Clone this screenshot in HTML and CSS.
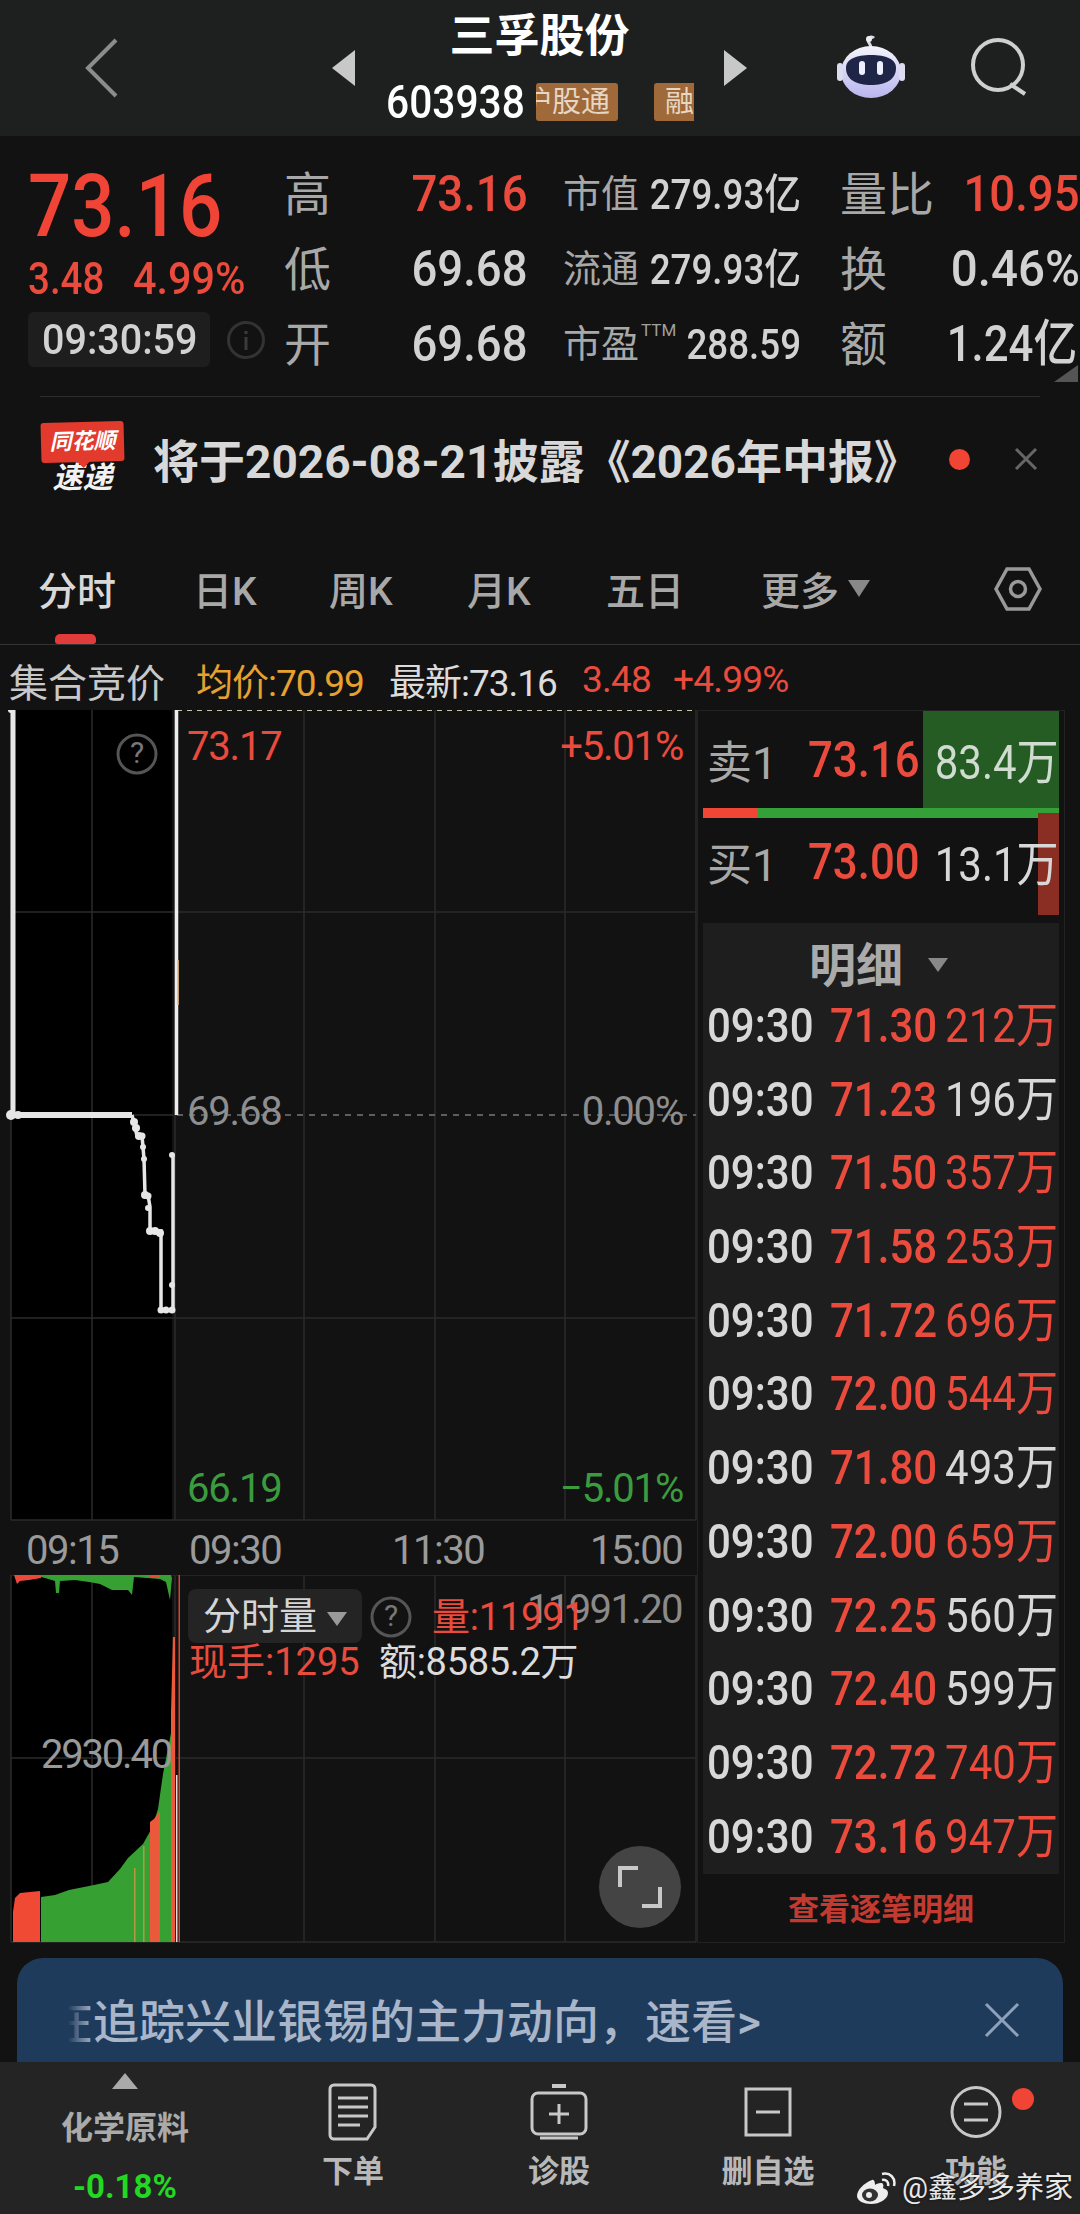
FILE: index.html
```html
<!DOCTYPE html>
<html lang="zh">
<head>
<meta charset="utf-8">
<title>三孚股份</title>
<link rel="stylesheet" href="styles.css">
</head>
<body>
<div class="page">
  <header class="header">
    <div class="back"><svg width="34" height="60" viewBox="0 0 34 60"><path d="M31 2 3 30l28 28" fill="none" stroke="#8c8c8c" stroke-width="4"/></svg></div>
    <div class="arrow-cell"><svg width="23" height="36" viewBox="0 0 23 36"><path d="M23 0v36L0 18z" fill="#c8c8c8"/></svg></div>
    <div class="title-cell">
      <div class="title">三孚股份</div>
      <div class="code-row">
        <span class="code">603938</span>
        <span class="tag tag-hk">沪股通</span>
        <span class="tag tag-rong">融</span>
      </div>
    </div>
    <div class="arrow-cell"><svg width="23" height="36" viewBox="0 0 23 36"><path d="M0 0v36l23-18z" fill="#c8c8c8"/></svg></div>
    <div class="robot">
      <svg width="68" height="64" viewBox="0 0 68 64">
        <defs><linearGradient id="rb" x1="0" y1="0" x2="0" y2="1"><stop offset="0" stop-color="#f4f4fb"/><stop offset="1" stop-color="#b9b4ee"/></linearGradient></defs>
        <path d="M34 13c0-4-3-5-3-8 0-3 4-4 6-2" fill="none" stroke="#d8d8e8" stroke-width="3"/>
        <circle cx="32" cy="4" r="3" fill="#eee"/>
        <ellipse cx="34" cy="37" rx="30" ry="26" fill="url(#rb)"/>
        <rect x="0" y="28" width="6" height="18" rx="3" fill="#dcdcf0"/>
        <rect x="62" y="28" width="6" height="18" rx="3" fill="#dcdcf0"/>
        <path d="M9 33c0-9 10-13 25-13s25 4 25 13c0 12-11 17-25 17S9 45 9 33z" fill="#1f2547"/>
        <rect x="22" y="26" width="6" height="14" rx="3" fill="#eef0ff"/>
        <rect x="40" y="26" width="6" height="14" rx="3" fill="#eef0ff"/>
      </svg>
    </div>
    <div class="search">
      <svg width="58" height="58" viewBox="0 0 58 58"><circle cx="27" cy="27" r="25" fill="none" stroke="#cfcfcf" stroke-width="4"/><path d="M39 46l15 10" stroke="#cfcfcf" stroke-width="4" fill="none"/></svg>
    </div>
  </header>

  <section class="stats">
    <div class="quote">
      <div class="price"><span class="sq">73.16</span></div>
      <div class="change"><span class="chg-a"><span class="sq">3.48</span></span><span class="sq sq-w">4.99%</span></div>
      <div class="time-row">
        <div class="time"><span class="sq sq-w">09:30:59</span></div>
        <svg class="info" width="38" height="40" viewBox="0 0 38 40"><circle cx="19" cy="20" r="17.5" fill="none" stroke="#333" stroke-width="3"/><path d="M19 11v3M19 17v13" stroke="#3b3b3b" stroke-width="3"/></svg>
      </div>
    </div>
    <div class="grid">
      <div class="lab">高</div><div class="val red"><span class="sqr sqr-n">73.16</span></div>
      <div class="mid"><span class="mid-lab">市值</span><span class="mid-val"><span class="sqr">279.93亿</span></span></div>
      <div class="right"><span class="lab">量比</span><span class="val red"><span class="sqr sqr-n">10.95</span></span></div>

      <div class="lab">低</div><div class="val"><span class="sqr sqr-n">69.68</span></div>
      <div class="mid"><span class="mid-lab">流通</span><span class="mid-val"><span class="sqr">279.93亿</span></span></div>
      <div class="right"><span class="lab">换</span><span class="val"><span class="sqr sqr-w">0.46%</span></span></div>

      <div class="lab">开</div><div class="val"><span class="sqr sqr-n">69.68</span></div>
      <div class="mid"><span class="mid-lab">市盈<sup class="ttm">TTM</sup></span><span class="mid-val"><span class="sqr">288.59</span></span></div>
      <div class="right right-last"><span class="lab">额</span><span class="val"><span class="sqr">1.24亿</span></span></div>
    </div>
    <i class="corner"></i>
  </section>

  <section class="news">
    <div class="logo">
      <div class="logo-top">同花顺</div>
      <div class="logo-bottom">速递</div>
    </div>
    <div class="news-text">将于2026-08-21披露《2026年中报》</div>
    <i class="news-dot"></i>
    <svg class="news-close" width="24" height="22" viewBox="0 0 24 22"><path d="M2 1l20 20M22 1 2 21" stroke="#666" stroke-width="3"/></svg>
  </section>

  <nav class="tabs">
    <span class="tab tab-on">分时</span>
    <span class="tab">日K</span>
    <span class="tab">周K</span>
    <span class="tab">月K</span>
    <span class="tab">五日</span>
    <span class="tab tab-more">更多<i class="tri tri-more"></i></span>
    <svg class="hex" width="48" height="44" viewBox="0 0 48 44"><path d="M13 2h22l11 20-11 20H13L2 22z" fill="none" stroke="#999" stroke-width="3.5"/><circle cx="24" cy="22" r="7.5" fill="none" stroke="#999" stroke-width="3.5"/></svg>
  </nav>

  <div class="infobar">
    <span class="auction">集合竞价</span>
    <span class="avg">均价:70.99</span>
    <span class="latest">最新:73.16</span>
    <span class="up">3.48</span>
    <span class="up up-pct">+4.99%</span>
  </div>

  <main class="market">
    <div class="charts">
      <div class="chart chart-price">
        <svg class="chart-svg" width="697" height="811" viewBox="0 710 697 811">
          <rect x="11" y="710" width="161" height="810" fill="#000"/>
          <g stroke="#2b2b2b" stroke-width="1.5">
            <path d="M92 710v810M175 710v810M304 710v810M435 710v810M565 710v810M696 710v810M11 710v810"/>
            <path d="M11 912h685M11 1318h685M11 1520h685M11 1115h166"/>
          </g>
          <path d="M177 710h519" stroke="#c9c4a8" stroke-width="2" stroke-dasharray="5 5"/>
          <path d="M177 1115h519" stroke="#777" stroke-width="1.5" stroke-dasharray="6 6"/>
          <path d="M13 710v405" stroke="#e6e6e6" stroke-width="5" fill="none"/>
          <path d="M176.500 710v405" stroke="#eee" stroke-width="3.500" fill="none"/>
          <path d="M178 960v45" stroke="#e8b878" stroke-width="1.500" fill="none"/>
          <path d="M9 1115h123" stroke="#e6e6e6" stroke-width="6" fill="none"/>
          <path d="M132 1115l3 12 2 9h5l1 11 1 12 1 36h3l2 12v24h11v79h12v-155" stroke="#e6e6e6" stroke-width="3.500" fill="none"/>
          <g fill="#e6e6e6">
            <circle cx="11" cy="710" r="3"/><circle cx="11" cy="1115" r="5"/><circle cx="18" cy="1115" r="4"/>
            <circle cx="134" cy="1122" r="4"/><circle cx="136" cy="1128" r="4"/><circle cx="139" cy="1136" r="4"/><circle cx="142" cy="1136" r="3.500"/>
            <circle cx="143" cy="1147" r="3"/><circle cx="144" cy="1159" r="3"/><circle cx="145" cy="1195" r="4"/><circle cx="148" cy="1196" r="3.500"/><circle cx="148" cy="1208" r="3"/>
            <circle cx="150" cy="1231" r="4"/><circle cx="155" cy="1231" r="4"/><circle cx="160" cy="1233" r="4"/>
            <circle cx="161" cy="1310" r="3.500"/><circle cx="166" cy="1310" r="3.500"/><circle cx="172" cy="1310" r="3.500"/>
            <circle cx="172" cy="1285" r="3"/><circle cx="172" cy="1155" r="3"/>
          </g>
        </svg>
        <svg class="help help-price" width="42" height="42" viewBox="0 0 42 42"><circle cx="21" cy="21" r="19" fill="none" stroke="#555" stroke-width="3"/><text x="21" y="30" text-anchor="middle" class="help-q">?</text></svg>
        <span class="lbl lbl-tl red">73.17</span>
        <span class="lbl lbl-tr red">+5.01%</span>
        <span class="lbl lbl-ml gray">69.68</span>
        <span class="lbl lbl-mr gray">0.00%</span>
        <span class="lbl lbl-bl green">66.19</span>
        <span class="lbl lbl-br green">−5.01%</span>
      </div>
      <div class="axis">
        <span class="ax ax-a">09:15</span>
        <span class="ax ax-b">09:30</span>
        <span class="ax ax-c">11:30</span>
        <span class="ax ax-d">15:00</span>
      </div>
      <div class="chart chart-vol">
        <svg class="chart-svg" width="697" height="368" viewBox="0 1575 697 368">
          <rect x="11" y="1575" width="161" height="367" fill="#000"/>
          <g stroke="#2b2b2b" stroke-width="1.5">
            <path d="M92 1575v367M175 1575v367M304 1575v367M435 1575v367M565 1575v367M696 1575v367M11 1575v367"/>
            <path d="M11 1575h685M11 1758h685M11 1942h685"/>
          </g>
          <path d="M14 1575h27v3l-12 2-9 1-3 3z" fill="#ea4b38"/>
          <path d="M41 1575H171l1 3-2 22-4-18-6-3-26-2-2 18-4-5-16 0-12-6-11-2-14-2-15 1-1 12h-3l-1-12-10-3-4-1z" fill="#36a033"/>
          <path d="M150 1575h10v2h-10z" fill="#ea4b38"/>
          <path d="M13 1942v-30l2-14 5-5 20-2v51z" fill="#f04a34"/>
          <path d="M41 1942v-45l14-2 14-5 25-5 14-3 12-13 8-11 15-14 9-16 6-19 5-35 9-46v214z" fill="#36a033"/>
          <path d="M150 1942v-120l4-3 6-8v131z" fill="#ea5a3a"/>
          <rect x="134" y="1868" width="1.500" height="74" fill="#b39a42"/>
          <rect x="143" y="1846" width="1.500" height="96" fill="#b39a42"/>
          <path d="M171 1942v-230l2-75 2 0v305z" fill="#ea5a3a"/>
          <rect x="178.500" y="1575" width="1.500" height="367" fill="#d44535"/>
          <rect x="176" y="1775" width="1.500" height="167" fill="#ddd"/>
        </svg>
        <div class="vol-chip">
          <span>分时量</span><i class="tri tri-chip"></i>
        </div>
        <svg class="help help-vol" width="42" height="42" viewBox="0 0 42 42"><circle cx="21" cy="21" r="19" fill="none" stroke="#555" stroke-width="3"/><text x="21" y="30" text-anchor="middle" class="help-q">?</text></svg>
        <span class="vol-max">11991.20</span>
        <span class="vol-amt red">量:11991</span>
        <span class="vol-hand red">现手:1295</span>
        <span class="vol-sum">额:8585.2万</span>
        <span class="vol-mid">2930.40</span>
        <div class="expand"><svg width="44" height="44" viewBox="0 0 44 44"><path d="M2 22V3h18M42 22v19H24" fill="none" stroke="#c8c8c8" stroke-width="4"/></svg></div>
      </div>
    </div>

    <aside class="panel">
      <div class="book book-sell">
        <i class="depth depth-sell"></i>
        <span class="book-lab">卖1</span>
        <span class="book-price"><span class="sq">73.16</span></span>
        <span class="book-vol book-vol-sell"><span class="sqr">83.4万</span></span>
      </div>
      <div class="ratio"><i class="ratio-up"></i><i class="ratio-down"></i></div>
      <div class="book book-buy">
        <i class="depth depth-buy"></i>
        <span class="book-lab">买1</span>
        <span class="book-price"><span class="sq">73.00</span></span>
        <span class="book-vol"><span class="sqr">13.1万</span></span>
      </div>
      <div class="detail">
        <div class="detail-title"><span>明细</span><i class="tri tri-detail"></i></div>
        <div class="tick"><span class="t"><span class="sq">09:30</span></span><span class="p"><span class="sq">71.30</span></span><span class="v red"><span class="sqr">212万</span></span></div>
        <div class="tick"><span class="t"><span class="sq">09:30</span></span><span class="p"><span class="sq">71.23</span></span><span class="v"><span class="sqr">196万</span></span></div>
        <div class="tick"><span class="t"><span class="sq">09:30</span></span><span class="p"><span class="sq">71.50</span></span><span class="v red"><span class="sqr">357万</span></span></div>
        <div class="tick"><span class="t"><span class="sq">09:30</span></span><span class="p"><span class="sq">71.58</span></span><span class="v red"><span class="sqr">253万</span></span></div>
        <div class="tick"><span class="t"><span class="sq">09:30</span></span><span class="p"><span class="sq">71.72</span></span><span class="v red"><span class="sqr">696万</span></span></div>
        <div class="tick"><span class="t"><span class="sq">09:30</span></span><span class="p"><span class="sq">72.00</span></span><span class="v red"><span class="sqr">544万</span></span></div>
        <div class="tick"><span class="t"><span class="sq">09:30</span></span><span class="p"><span class="sq">71.80</span></span><span class="v"><span class="sqr">493万</span></span></div>
        <div class="tick"><span class="t"><span class="sq">09:30</span></span><span class="p"><span class="sq">72.00</span></span><span class="v red"><span class="sqr">659万</span></span></div>
        <div class="tick"><span class="t"><span class="sq">09:30</span></span><span class="p"><span class="sq">72.25</span></span><span class="v"><span class="sqr">560万</span></span></div>
        <div class="tick"><span class="t"><span class="sq">09:30</span></span><span class="p"><span class="sq">72.40</span></span><span class="v"><span class="sqr">599万</span></span></div>
        <div class="tick"><span class="t"><span class="sq">09:30</span></span><span class="p"><span class="sq">72.72</span></span><span class="v red"><span class="sqr">740万</span></span></div>
        <div class="tick"><span class="t"><span class="sq">09:30</span></span><span class="p"><span class="sq">73.16</span></span><span class="v red"><span class="sqr">947万</span></span></div>
      </div>
      <div class="detail-link">查看逐笔明细</div>
    </aside>
  </main>

  <section class="banner">
    <span class="banner-fade">在</span>
    <span class="banner-text">追踪兴业银锡的主力动向，速看&gt;</span>
    <svg class="banner-close" width="36" height="36" viewBox="0 0 36 36"><path d="M2 2l32 32M34 2 2 34" stroke="#8ea1bb" stroke-width="3"/></svg>
  </section>

  <footer class="nav">
    <div class="nav-sector">
      <i class="nav-up"></i>
      <span class="sector-name">化学原料</span>
      <span class="sector-pct">-0.18%</span>
    </div>
    <div class="nav-item">
      <svg width="50" height="58" viewBox="0 0 50 58"><path d="M6 2h37a4 4 0 0 1 4 4v38l-8 12H6a4 4 0 0 1-4-4V6a4 4 0 0 1 4-4z" fill="none" stroke="#c8c8c8" stroke-width="3"/><path d="M10 15h30M10 24h30M10 33h30M10 42h22" stroke="#c8c8c8" stroke-width="3"/></svg>
      <span>下单</span>
    </div>
    <div class="nav-item">
      <svg width="58" height="58" viewBox="0 0 58 58"><path d="M22 3h14" stroke="#c8c8c8" stroke-width="4"/><rect x="2" y="10" width="54" height="41" rx="6" fill="none" stroke="#c8c8c8" stroke-width="3"/><path d="M29 21v20M19 31h20M10 55h38" stroke="#c8c8c8" stroke-width="3"/></svg>
      <span>诊股</span>
    </div>
    <div class="nav-item">
      <svg width="48" height="58" viewBox="0 0 48 58"><rect x="2" y="6" width="44" height="46" fill="none" stroke="#c8c8c8" stroke-width="3"/><path d="M12 29h24" stroke="#c8c8c8" stroke-width="3"/></svg>
      <span>删自选</span>
    </div>
    <div class="nav-item">
      <svg width="52" height="58" viewBox="0 0 52 58"><ellipse cx="26" cy="29" rx="24" ry="24.500" fill="none" stroke="#c8c8c8" stroke-width="3"/><path d="M14 21h24M14 37h24" stroke="#c8c8c8" stroke-width="3"/></svg>
      <span>功能</span>
      <i class="nav-dot"></i>
    </div>
  </footer>

  <div class="watermark">
    <svg width="40" height="34" viewBox="0 0 40 34"><path d="M16 9C8 12 1 19 1 25c0 5 7 8 14 8 9 0 17-5 17-11 0-3-3-4-5-5 1-3 0-5-2-5-3 0-5 1-6 2 0-3-1-6-3-5z" fill="#eee"/><ellipse cx="14" cy="24" rx="8" ry="6.500" fill="#333"/><circle cx="13" cy="24" r="3" fill="#eee"/><path d="M26 9c4-1 7 2 6 6M26 3c8-2 14 4 12 12" fill="none" stroke="#eee" stroke-width="2.500"/></svg>
    <span>@鑫多多养家</span>
  </div>
</div>
</body>
</html>
```
FILE: styles.css
```css
* { box-sizing: border-box; }
html, body { margin: 0; padding: 0; background: #121212; }
body { font-family: Roboto, "Noto Sans CJK SC", sans-serif; }
i { display: block; font-style: normal; }
svg { display: block; }

.page { position: relative; width: 1080px; height: 2214px; overflow: hidden; background: #121212; color: #d5d5d5; }
.red { color: #ea4b3c; }
.gray { color: #8e8e8e; }
.green { color: #3a9c3e; }

.sq { display: inline-block; transform: scaleX(.875); transform-origin: left center; white-space: nowrap; }
.sqr { display: inline-block; transform: scaleX(.875); transform-origin: right center; white-space: nowrap; }
.sq-w { transform: scaleX(.94); }
.sqr-n { transform: scaleX(.91); }
.sqr-w { transform: scaleX(.95); }

.tri { width: 0; height: 0; border-left: 10px solid transparent; border-right: 10px solid transparent; border-top: 14px solid #999; }

/* header */
.header { height: 136px; background: #1e2020; display: grid; grid-template-columns: 332px 23px 369px 23px 224px 1fr; align-items: center; }
.back { padding-left: 85px; }
.arrow-cell { margin-top: -1px; }
.title-cell { display: flex; flex-direction: column; align-items: center; height: 136px; }
.title { font-size: 45px; font-weight: 700; line-height: 50px; margin-top: 12px; color: #fff; }
.code-row { display: flex; align-items: center; height: 38px; margin-top: 21px; align-self: flex-start; padding-left: 31px; }
.code { font-size: 46px; font-weight: 500; line-height: 38px; color: #fff; width: 150px; display: inline-block; transform: scaleX(.885); transform-origin: left center; }
.tag { height: 38px; background: #a0693a; color: #e6d6c4; font-size: 29px; line-height: 38px; overflow: hidden; white-space: nowrap; border-radius: 3px; display: flex; }
.tag-hk { width: 82px; justify-content: flex-end; padding-right: 8px; }
.tag-rong { width: 40px; margin-left: 36px; padding-left: 11px; border-radius: 3px 0 0 3px; }
.robot { padding-left: 90px; margin-top: -3px; }
.search { margin-top: -3px; }

/* stats */
.stats { position: relative; height: 261px; padding-top: 19px; display: grid; grid-template-columns: 284px 1fr; }
.stats::after { content: ""; position: absolute; left: 40px; width: 1000px; bottom: 0; height: 1px; background: #2c2c2c; }
.quote { padding-left: 28px; }
.price { font-size: 87px; font-weight: 500; line-height: 102px; color: #ef4436; height: 102px; }
.change { font-size: 44px; line-height: 44px; height: 44px; color: #ea4b3c; display: flex; font-weight: 500; }
.chg-a { width: 105px; }
.time-row { display: flex; align-items: center; margin-top: 11px; }
.time { width: 182px; height: 55px; background: #1e1e1e; border-radius: 6px; padding-left: 14px; font-size: 42px; font-weight: 500; line-height: 55px; color: #d2d2d2; }
.info { margin-left: 17px; }

.grid { display: grid; grid-template-columns: 116px 123px 40px 238px 39px 240px; grid-template-rows: repeat(3, 75px); align-items: center; margin-top: 2px; }
.lab { font-size: 47px; line-height: 75px; color: #a8a8a8; white-space: nowrap; }
.val { font-size: 50px; font-weight: 500; line-height: 75px; color: #d2d2d2; text-align: right; white-space: nowrap; }
.val.red { color: #ea4b3c; }
.mid { grid-column: 4; display: flex; justify-content: space-between; align-items: center; }
.mid-lab { font-size: 38px; color: #a8a8a8; line-height: 75px; display: flex; white-space: nowrap; flex: none; }
.ttm { font-size: 17px; line-height: 30px; color: #a0a0a0; margin-left: 2px; height: 30px; margin-top: 8px; }
.mid-val { flex: 0 0 110px; min-width: 0; display: flex; justify-content: flex-end; font-size: 42px; font-weight: 500; color: #d2d2d2; line-height: 75px; white-space: nowrap; }
.mid-val .sqr { flex: none; }
.right { grid-column: 6; display: flex; justify-content: space-between; align-items: center; }
.right-last { padding-right: 3px; }
.corner { position: absolute; right: 2px; bottom: 15px; width: 0; height: 0; border-left: 24px solid transparent; border-bottom: 17px solid #555; }

/* news */
.news { height: 120px; padding: 10px 0 0 41px; display: flex; align-items: center; }
.logo { width: 83px; margin-top: -10px; display: flex; flex-direction: column; align-items: center; }
.logo-top { position: relative; width: 83px; height: 40px; background: #e33a2e; border-radius: 3px; color: #fff; font-size: 22px; font-weight: 700; font-style: italic; line-height: 40px; text-align: center; white-space: nowrap; transform: rotate(-1.5deg); }
.logo-top::after { content: ""; position: absolute; left: 34px; top: 38px; border-left: 8px solid transparent; border-right: 8px solid transparent; border-top: 8px solid #e33a2e; }
.logo-bottom { font-size: 30px; font-weight: 700; font-style: italic; line-height: 30px; margin-top: 1px; color: #f2f2f2; }
.news-text { margin-left: 29px; font-size: 46px; font-weight: 700; line-height: 60px; color: #d8d8d8; white-space: nowrap; width: 796px; }
.news-dot { width: 21px; height: 21px; border-radius: 50%; background: #f04435; margin-top: -6px; }
.news-close { margin-left: 44px; margin-top: -6px; }

/* tabs */
.tabs { position: relative; height: 128px; padding-top: 47px; border-bottom: 1.5px solid #333; display: grid; grid-template-columns: 38px 155px 136px 138px 139px 155px 233px 1fr; }
.tab { font-size: 39px; line-height: 56px; color: #a8a8a8; font-weight: 500; white-space: nowrap; }
.tab:first-child { grid-column: 2; }
.tab-on { color: #d8d8d8; position: relative; }
.tab-on::after { content: ""; position: absolute; left: 17px; width: 41px; top: 70px; height: 10px; border-radius: 5px 5px 3px 3px; background: #e13b3b; }
.tab-more { display: flex; }
.tri-more { margin: 16px 0 0 9px; border-left-width: 11px; border-right-width: 11px; border-top-width: 17px; border-top-color: #888; }
.hex { margin-top: 3px; }

/* info bar */
.infobar { height: 65px; display: flex; align-items: center; padding: 4px 0 0 9px; white-space: nowrap; }
.auction { font-size: 39px; color: #c8c8c8; width: 187px; }
.avg { font-size: 37px; color: #e6a12f; width: 193px; letter-spacing: -1px; }
.latest { font-size: 37px; color: #dcdcdc; width: 193px; letter-spacing: -1px; }
.up { font-size: 37px; color: #ea4b3c; width: 91px; letter-spacing: -.8px; }

/* market */
.market { height: 1233px; display: grid; grid-template-columns: 697px 1fr; }
.chart { position: relative; }
.chart-price { height: 811px; }
.chart-vol { height: 368px; }
.axis { height: 54px; position: relative; }
.chart-svg { position: absolute; left: 0; top: 0; }
.help { position: absolute; }
.help-price { left: 116px; top: 23px; }
.help-vol { left: 370px; top: 21px; }
.help-q { font-size: 30px; fill: #777; font-family: Roboto, sans-serif; }

.lbl { position: absolute; font-size: 40px; line-height: 40px; letter-spacing: -1.2px; white-space: nowrap; }
.lbl-tl { left: 187px; top: 17px; }
.lbl-tr { right: 14px; top: 17px; }
.lbl-ml { left: 187px; top: 382px; }
.lbl-mr { right: 14px; top: 382px; }
.lbl-bl { left: 187px; top: 759px; }
.lbl-br { right: 14px; top: 759px; }
.ax { position: absolute; top: 10px; font-size: 40px; line-height: 40px; color: #9a9a9a; letter-spacing: -1.5px; }
.ax-a { left: 26px; }
.ax-b { left: 189px; }
.ax-c { left: 392px; }
.ax-d { left: 590px; }

.vol-chip { position: absolute; left: 188px; top: 14px; width: 174px; height: 54px; background: #242424; border-radius: 8px; padding-left: 15px; font-size: 38px; line-height: 54px; color: #d5d5d5; display: flex; }
.tri-chip { margin: 23px 0 0 10px; border-top-color: #9a9a9a; }
.vol-max { position: absolute; right: 15px; top: 15px; font-size: 40px; line-height: 40px; color: #8a8a8a; letter-spacing: -1.6px; }
.vol-amt { position: absolute; left: 432px; top: 22px; font-size: 38px; line-height: 40px; letter-spacing: -.2px; }
.vol-hand { position: absolute; left: 189px; top: 67px; font-size: 38px; line-height: 40px; }
.vol-sum { position: absolute; left: 379px; top: 67px; font-size: 38px; line-height: 40px; color: #dcdcdc; letter-spacing: -.3px; }
.vol-mid { position: absolute; left: 41px; top: 160px; font-size: 40px; line-height: 40px; color: #999; letter-spacing: -2.2px; }
.expand { position: absolute; left: 599px; top: 271px; width: 82px; height: 82px; border-radius: 50%; background: #444; display: flex; align-items: center; justify-content: center; }

/* panel */
.panel { width: 368px; height: 1233px; border: 1px solid #222; padding: 0 5px; position: relative; }
.book { position: relative; display: grid; grid-template-columns: 101px 127px minmax(0, 1fr); padding-left: 4px; align-items: center; }
.book-sell { height: 97px; }
.book-buy { height: 105px; padding-bottom: 18px; }
.book-lab { font-size: 45px; color: #a8a8a8; position: relative; }
.book-price { font-size: 50px; font-weight: 500; color: #ea4b3c; position: relative; }
.book-vol { font-size: 48px; color: #d8d8d8; position: relative; padding: 0 0 4px 0; white-space: nowrap; justify-self: end; }
.book-vol-sell { color: #cfdccf; }
.depth { position: absolute; right: 0; }
.depth-sell { top: 0; bottom: 0; width: 136px; background: #245c24; }
.depth-buy { top: -5px; height: 102px; width: 21px; background: #8a2d22; }
.ratio { height: 10px; display: flex; }
.ratio-up { width: 55px; background: #f04636; }
.ratio-down { flex: 1; background: #34a038; }
.detail { background: #1e1e1e; height: 951px; }
.detail-title { height: 66px; position: relative; display: flex; justify-content: center; align-items: center; font-size: 47px; font-weight: 700; color: #aaa; line-height: 60px; padding-top: 20px; padding-right: 50px; }
.tri-detail { position: absolute; left: 225px; top: 35px; border-top-color: #888; }
.tick { height: 73.7px; display: grid; grid-template-columns: 123px 102px minmax(0, 1fr); padding-left: 4px; font-size: 48px; font-weight: 500; line-height: 73.7px; white-space: nowrap; }
.tick .t { color: #d8d8d8; }
.tick .p { color: #ea4b3c; }
.tick .v { justify-self: end; padding-right: 1px; color: #d8d8d8; font-size: 48px; font-weight: 400; }
.tick .v.red { color: #ea4b3c; }
.detail-link { text-align: center; font-size: 31px; font-weight: 700; line-height: 70px; color: #c23a30; margin-top: 1px; }

/* banner */
.banner { margin: 15px 17px 0; height: 104px; border-radius: 26px 26px 0 0; background: #1f3b5c; display: flex; align-items: center; padding-top: 24px; position: relative; }
.banner-text { font-size: 46px; font-weight: 500; color: #a9b5c8; line-height: 60px; white-space: nowrap; }
.banner-fade { width: 25px; margin-left: 51px; font-size: 46px; font-weight: 500; line-height: 60px; color: #a9b5c8; overflow: hidden; direction: rtl; white-space: nowrap; -webkit-mask-image: linear-gradient(90deg, transparent, #000); mask-image: linear-gradient(90deg, transparent, #000); }
.banner-close { position: absolute; left: 967px; top: 44px; }

/* nav */
.nav { height: 152px; background: #242424; display: grid; grid-template-columns: 250px 206px 206px 212px 204px; position: relative; }
.nav-sector { display: flex; flex-direction: column; align-items: center; padding-top: 11px; }
.nav-up { width: 0; height: 0; border-left: 13px solid transparent; border-right: 13px solid transparent; border-bottom: 16px solid #aaa; }
.sector-name { font-size: 32px; font-weight: 700; color: #aaa; line-height: 44px; margin-top: 17px; }
.sector-pct { font-size: 33px; font-weight: 700; color: #22d822; line-height: 40px; margin-top: 17px; }
.nav-item { position: relative; display: flex; flex-direction: column; align-items: center; padding-top: 21px; }
.nav-item span { font-size: 31px; font-weight: 700; color: #b8b8b8; line-height: 44px; margin-top: 9px; white-space: nowrap; }
.nav-dot { position: absolute; left: 138px; top: 26px; width: 22px; height: 22px; border-radius: 50%; background: #f04435; }

.watermark { position: absolute; left: 856px; top: 2170px; display: flex; align-items: center; gap: 6px; color: #e8e8e8; font-size: 29px; line-height: 36px; white-space: nowrap; text-shadow: 0 0 3px #111; }
```
